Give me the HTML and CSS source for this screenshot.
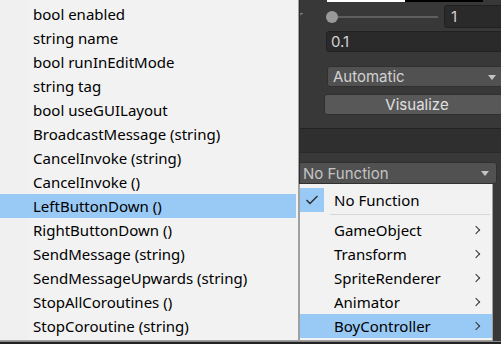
FILE: index.html
```html
<!DOCTYPE html>
<html>
<head>
    <title>Inspector - Function Menu</title>
    <link rel="stylesheet" href="styles.css">
</head>
<body>
    <div class="inspector">
        <div class="strip"><span class="strip-white"></span><span class="strip-black"></span></div>

        <div class="row row-slider">
            <span class="label">Smoothing Factor</span>
            <div class="slider"><span class="knob"></span></div>
            <div class="field num">1</div>
        </div>

        <div class="row row-float">
            <div class="field">0.1</div>
        </div>

        <div class="row row-popup">
            <div class="popup">Automatic<span class="caret"></span></div>
        </div>

        <div class="row row-button">
            <button class="btn">Visualize</button>
        </div>

        <div class="section-bar"></div>

        <div class="row row-event">
            <div class="popup popup-event">No Function<span class="caret"></span></div>
        </div>

        <div class="footer"></div>
    </div>

    <!-- method list of the selected component -->
    <div class="menu menu-methods">
        <div class="item">bool enabled</div>
        <div class="item">string name</div>
        <div class="item">bool runInEditMode</div>
        <div class="item">string tag</div>
        <div class="item">bool useGUILayout</div>
        <div class="item">BroadcastMessage (string)</div>
        <div class="item">CancelInvoke (string)</div>
        <div class="item">CancelInvoke ()</div>
        <div class="item hover">LeftButtonDown ()</div>
        <div class="item">RightButtonDown ()</div>
        <div class="item">SendMessage (string)</div>
        <div class="item">SendMessageUpwards (string)</div>
        <div class="item">StopAllCoroutines ()</div>
        <div class="item">StopCoroutine (string)</div>
    </div>

    <!-- component list -->
    <div class="menu menu-components">
        <div class="item checked">
            <span class="check">
                <svg width="14" height="10" viewBox="0 0 14 10"><path d="M1.5 5 L5 8.5 L12.5 1" fill="none" stroke="#2b2b2b" stroke-width="1.4"/></svg>
            </span>
            No Function
        </div>
        <div class="separator"></div>
        <div class="item sub">GameObject<span class="arrow"></span></div>
        <div class="item sub">Transform<span class="arrow"></span></div>
        <div class="item sub">SpriteRenderer<span class="arrow"></span></div>
        <div class="item sub">Animator<span class="arrow"></span></div>
        <div class="item sub hover">BoyController<span class="arrow"></span></div>
    </div>
</body>
</html>
```

FILE: styles.css
```css
body { margin: 0; width: 501px; height: 344px; overflow: hidden; background: #383838; font-family: Inter, "Noto Sans", sans-serif; font-size: 15px; color: #d2d2d2; position: relative; }

.inspector { width: 510px; display: flex; flex-direction: column; }
.strip { display: flex; height: 2px; padding-left: 327px; }
.strip-white { width: 78px; background: #ffffff; }
.strip-black { width: 78px; background: #000000; }

.row { display: flex; align-items: center; }
.row-slider { height: 23px; margin-top: 3px; }
.row-float { height: 21px; margin-top: 3px; padding-left: 326px; }
.row-popup { height: 21px; margin-top: 14px; padding-left: 327px; }
.row-button { height: 21px; margin-top: 7px; padding-left: 324px; }
.row-event { height: 22px; margin-top: 9px; padding-left: 296px; }

.label { flex: 0 0 303px; text-align: right; white-space: nowrap; overflow: hidden; color: #8c8c8c; }
.slider { flex: 0 0 112px; margin-left: 23px; height: 23px; position: relative; display: flex; align-items: center; }
.slider::before { content: ""; flex: 1; height: 2px; background: #5e5e5e; }
.knob { position: absolute; left: 0; top: 6px; width: 12px; height: 12px; border-radius: 50%; background: #999999; }

.field { flex: 1; height: 100%; box-sizing: border-box; background: #2a2a2a; border: 1px solid #212121; border-radius: 3px; padding-left: 4px; display: flex; align-items: center; }
.field.num { margin-left: 6px; padding-left: 6px; }

.popup { flex: 1; height: 100%; box-sizing: border-box; background: #515151; border: 1px solid #303030; border-radius: 3px; padding-left: 5px; display: flex; align-items: center; position: relative; }
.popup-event { flex: 0 0 201px; padding-left: 6px; color: #c4c4c4; }
.caret { position: absolute; right: 7px; top: 8px; width: 0; height: 0; border-left: 4px solid transparent; border-right: 4px solid transparent; border-top: 5px solid #c4c4c4; }
.row-popup .caret { right: 13px; }

.btn { flex: 1; height: 100%; background: #585858; border: 1px solid #303030; border-radius: 3px; color: #e0e0e0; font-family: inherit; font-size: 15px; padding: 0; }

.section-bar { margin-top: 13px; height: 23px; background: #2f2f2f; border-top: 1px solid #232323; border-bottom: 1px solid #2a2a2a; }
.footer { margin-top: 157px; height: 10px; background: #232323; border-top: 1px solid #8a8a8a; }

.menu { position: absolute; background: #f2f2f2; color: #000; font-family: "Noto Sans", sans-serif; font-size: 15px; box-sizing: border-box; }
.item { height: 24px; line-height: 24px; padding-left: 33px; white-space: nowrap; position: relative; }
.item.hover { background: #99c9f5; }

.menu-methods { left: 0; top: 0; width: 299px; height: 341px; padding-top: 2px; border-right: 1px solid #a0a0a0; border-bottom: 1px solid #a0a0a0; background: linear-gradient(to right, #f0f0f0 28px, #f2f2f2 28px); box-shadow: 1px 0 0 #2b2b2b; }
.menu-methods .item { margin-right: 2px; }

.menu-components { left: 299px; top: 184px; width: 194px; height: 157px; padding-top: 4px; border: 1px solid #a0a0a0; border-top: none; }
.menu-components .item { padding-left: 34px; }
.check { position: absolute; left: 0; top: 0; width: 24px; height: 24px; background: #99c9f5; display: flex; align-items: center; justify-content: center; }
.separator { height: 1px; margin: 2px 2px 3px 30px; background: #d7d7d7; }
.arrow { position: absolute; right: 13px; top: 9px; width: 5px; height: 5px; border-right: 1px solid #333; border-top: 1px solid #333; transform: rotate(45deg); }
```
